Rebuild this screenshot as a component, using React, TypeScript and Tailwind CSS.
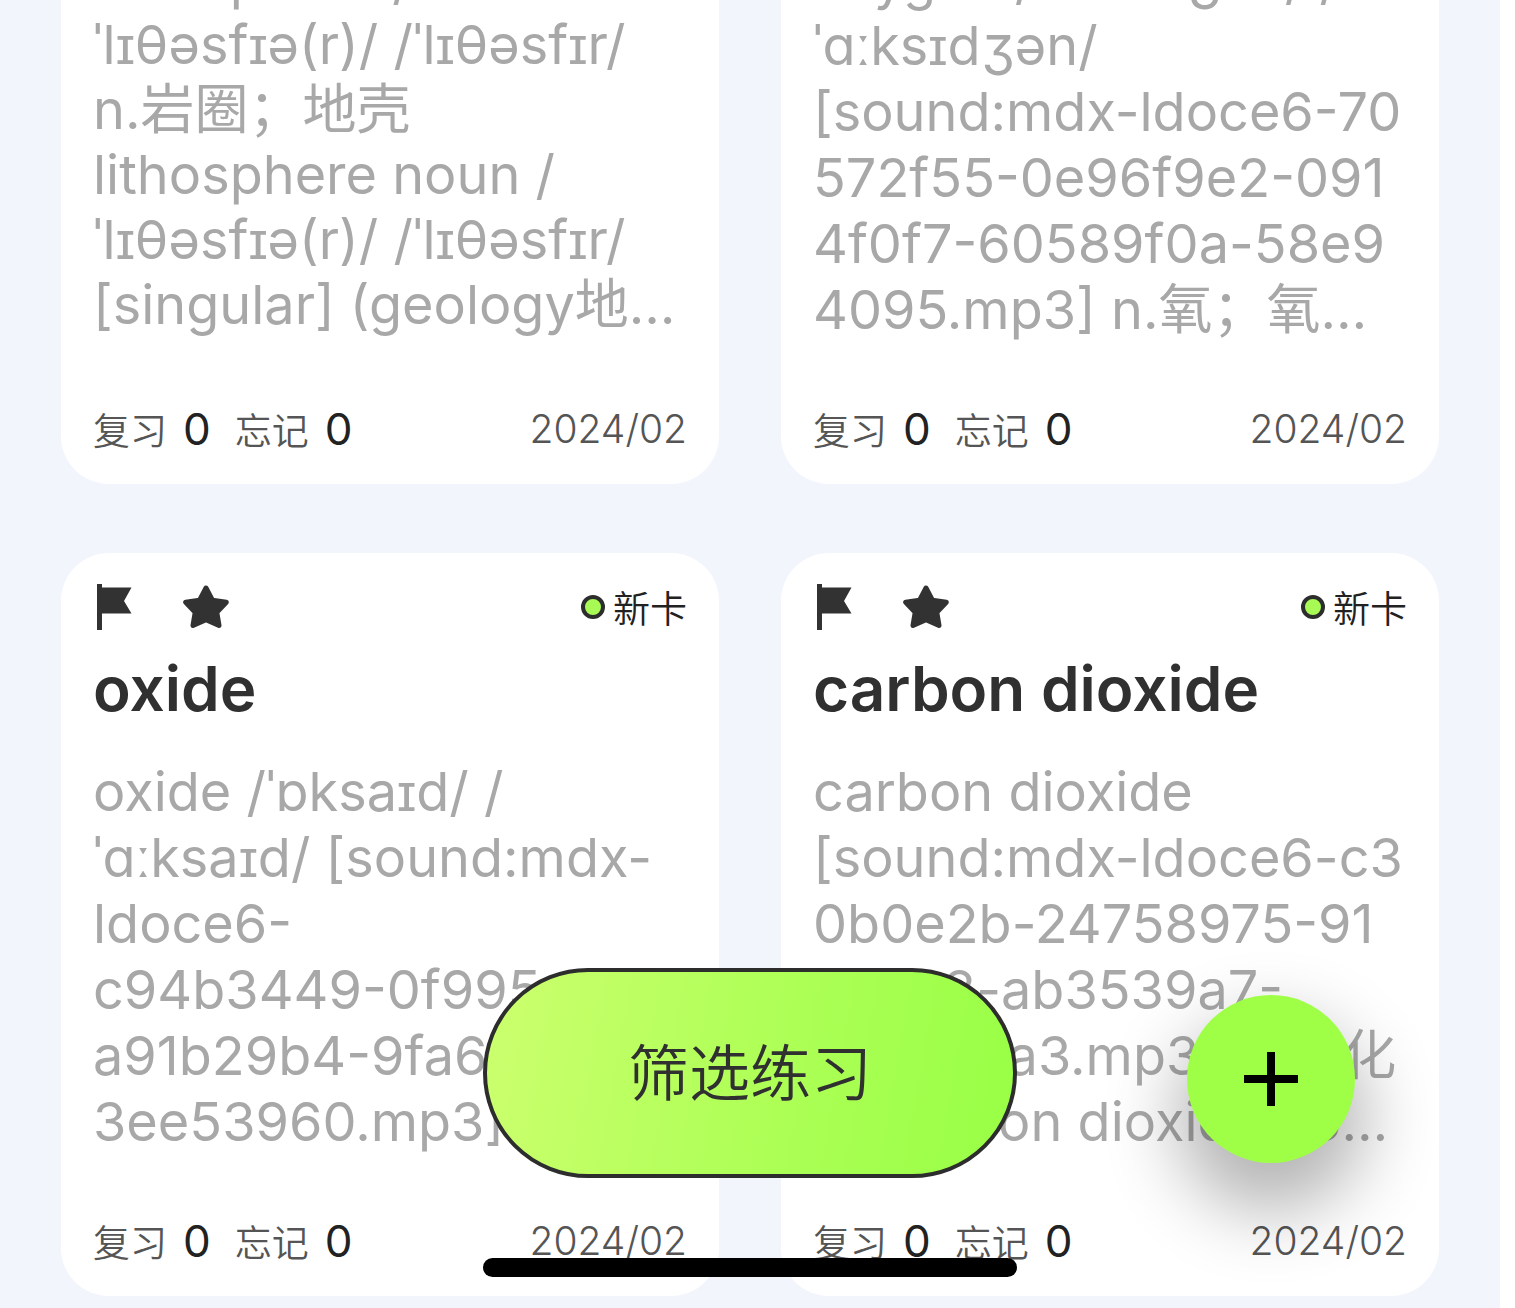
import React from "react";

type WordCard = {
    id: string;
    title: string;
    lines: string[];
    leading: string;
    reviewed: number;
    forgotten: number;
    date: string;
};

const cards: WordCard[] = [
    {
        id: "lithosphere",
        title: "lithosphere",
        lines: [
            "lithosphere /",
            "ˈlɪθəsfɪə(r)/ /ˈlɪθəsfɪr/",
            "n.岩圈；地壳",
            "lithosphere noun /",
            "ˈlɪθəsfɪə(r)/ /ˈlɪθəsfɪr/",
            "[singular] (geology地…",
        ],
        leading: "leading-[65px]",
        reviewed: 0,
        forgotten: 0,
        date: "2024/02",
    },
    {
        id: "oxygen",
        title: "oxygen",
        lines: [
            "oxygen /ˈɒksɪdʒən/ /",
            "ˈɑːksɪdʒən/",
            "[sound:mdx-ldoce6-70",
            "572f55-0e96f9e2-091",
            "4f0f7-60589f0a-58e9",
            "4095.mp3] n.氧；氧…",
        ],
        leading: "leading-[66px]",
        reviewed: 0,
        forgotten: 0,
        date: "2024/02",
    },
    {
        id: "oxide",
        title: "oxide",
        lines: [
            "oxide /ˈɒksaɪd/ /",
            "ˈɑːksaɪd/ [sound:mdx-",
            "ldoce6-",
            "c94b3449-0f995",
            "a91b29b4-9fa6",
            "3ee53960.mp3]",
        ],
        leading: "leading-[66px]",
        reviewed: 0,
        forgotten: 0,
        date: "2024/02",
    },
    {
        id: "carbon-dioxide",
        title: "carbon dioxide",
        lines: [
            "carbon dioxide",
            "[sound:mdx-ldoce6-c3",
            "0b0e2b-24758975-91",
            "b5dc8-ab3539a7-",
            "e27b9da3.mp3] 二氧化",
            "碳 carbon dioxide no…",
        ],
        leading: "leading-[66px]",
        reviewed: 0,
        forgotten: 0,
        date: "2024/02",
    },
];

const FlagIcon: React.FC = () => (
    <svg viewBox="0 0 36 46" className="h-[46px] w-9" fill="#323232" aria-hidden="true">
        <path d="M0 0h5v3.5h29.5L27 17l7.5 12.5H5V46H0z" />
    </svg>
);

const StarIcon: React.FC = () => (
    <svg viewBox="0 0 46 44" className="h-11 w-[46px]" fill="#323232" stroke="#323232" strokeWidth="5" strokeLinejoin="round" aria-hidden="true">
        <path d="M23 3l6.4 12.2L43.3 17.2 33.8 27.4 36 40.5 23 34.8 10 40.5 12.2 27.4 2.7 17.2 16.6 15.2z" />
    </svg>
);

const Card: React.FC<{ card: WordCard }> = ({ card }) => {
    return (
        <article className="flex min-w-0 flex-col rounded-[48px] bg-white px-8 pt-[29px] pb-[31px]">
            <div className="flex h-[50px] items-center justify-between">
                <div className="flex items-center gap-[50px] pl-1">
                    <button type="button" aria-label="Flag">
                        <FlagIcon />
                    </button>
                    <button type="button" aria-label="Favourite">
                        <StarIcon />
                    </button>
                </div>
                <div className="flex items-center gap-2 text-[37px] leading-[48px] font-[350] text-[#222222]">
                    <span className="h-6 w-6 rounded-full border-4 border-[#2d2d2d] bg-[#a8fb55]" />
                    <span className="pt-1.5">新卡</span>
                </div>
            </div>

            <h2 className="mt-[21px] text-[62px] leading-[72px] font-semibold whitespace-nowrap text-[#303030]">{card.title}</h2>

            <div className={`mt-[34px] min-h-[396px] text-[54px] whitespace-nowrap text-[#a8a8a8] ${card.leading}`}>
                {card.lines.map((line, index) => (
                    <p key={index}>{line}</p>
                ))}
            </div>

            {/* Review stats */}
            <div className="mt-[62px] flex h-12 items-center justify-between text-[37px] leading-[48px] font-[350] text-[#555555]">
                <div className="flex items-center gap-4">
                    <span className="pt-1.5">复习</span>
                    <span className="text-[44px] font-normal text-[#222222]">{card.reviewed}</span>
                    <span className="ml-2 pt-1.5">忘记</span>
                    <span className="text-[44px] font-normal text-[#222222]">{card.forgotten}</span>
                </div>
                <time className="text-[39px]">{card.date}</time>
            </div>
        </article>
    );
};

const App: React.FC = () => {
    return (
        <div className="h-screen bg-white pr-[15px] font-['Inter','Noto_Sans_CJK_SC',sans-serif]">
            <main className="relative flex h-full flex-col justify-end overflow-hidden bg-[#f2f6fc] px-[61px] pb-3">
                <div className="grid grid-cols-2 gap-x-[62px] gap-y-[69px]">
                    {cards.map((card) => (
                        <Card key={card.id} card={card} />
                    ))}
                </div>

                {/* Floating actions */}
                <div className="absolute inset-x-0 bottom-[130px] flex justify-center">
                    <button
                        type="button"
                        className="h-[210px] w-[534px] rounded-full border-4 border-[#2d2d2d] bg-linear-[100deg,#ccff6e,#b0ff58_50%,#98ff45] pt-1 text-[61px] font-[350] text-[#303030]"
                    >
                        筛选练习
                    </button>
                </div>
                <button
                    type="button"
                    aria-label="Add card"
                    className="absolute right-[145px] bottom-[145px] flex h-[168px] w-[168px] items-center justify-center rounded-full bg-[#9fff47] shadow-[0_38px_72px_10px_rgba(0,0,0,0.3)]"
                >
                    <svg viewBox="0 0 54 54" className="h-[54px] w-[54px]" fill="#000000" aria-hidden="true">
                        <path d="M23 0h8v23h23v8H31v23h-8V31H0v-8h23z" />
                    </svg>
                </button>

                {/* Home indicator */}
                <div className="absolute inset-x-0 bottom-[31px] flex justify-center">
                    <div className="h-[19px] w-[534px] rounded-full bg-black" />
                </div>
            </main>
        </div>
    );
};

export default App;
